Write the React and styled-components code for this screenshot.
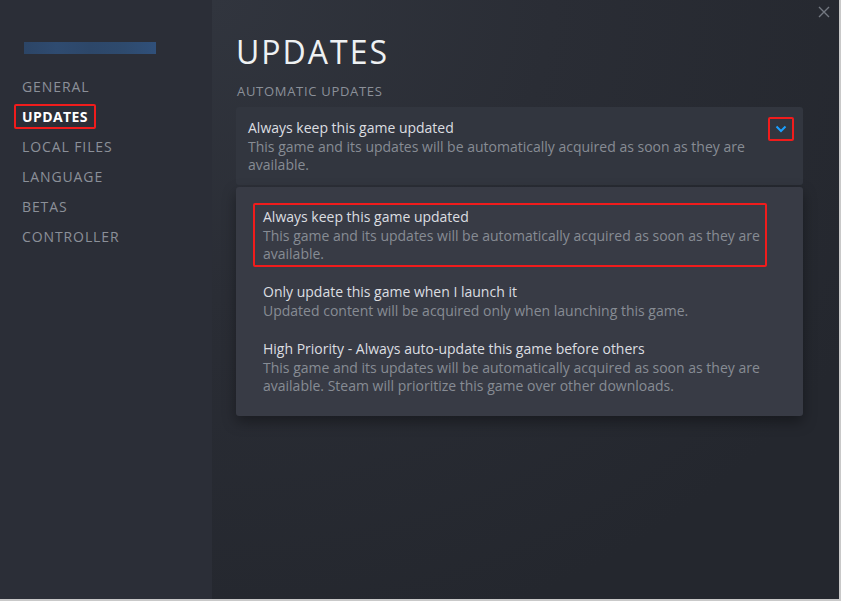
import React from "react";
import styled, { createGlobalStyle } from "styled-components";

const GlobalStyle = createGlobalStyle`
  html, body {
    margin: 0;
    padding: 0;
    background: #c9c9c9;
  }
  body {
    font-family: "Open Sans", "Noto Sans", Arial, sans-serif;
  }
`;

const Window = styled.div`
  display: flex;
  width: 840px;
  height: 600px;
  box-sizing: border-box;
  border-right: 1px solid #c9c9c9;
  border-bottom: 1px solid #c9c9c9;
  overflow: hidden;
`;

const Sidebar = styled.nav`
  width: 212px;
  flex-shrink: 0;
  background: #2b2e37;
  padding: 42px 0 0 22px;
  box-sizing: border-box;
  display: flex;
  flex-direction: column;
`;

const NameBar = styled.div`
  width: 132px;
  height: 12px;
  margin: 0 0 17px 2px;
  background: linear-gradient(
    90deg,
    #2c4566 0%,
    #2f4b70 25%,
    #2d4769 50%,
    #2e4a6d 75%,
    #30507a 100%
  );
`;

const NavItem = styled.div`
  height: 30px;
  display: flex;
  align-items: center;
`;

const NavLabel = styled.span`
  margin-left: -8px;
  padding: 3px 8px;
  line-height: 19px;
  font-size: 14px;
  letter-spacing: ${(p) => (p.active ? "0.4px" : "0.9px")};
  border-radius: 2px;
  color: ${(p) => (p.active ? "#ffffff" : "#8b9099")};
  font-weight: ${(p) => (p.active ? 700 : 400)};
  box-shadow: ${(p) => (p.marked ? "inset 0 0 0 2px #f01c1c" : "none")};
`;

const Main = styled.main`
  position: relative;
  flex: 1;
  padding: 30px 36px 0 24px;
  background: radial-gradient(
    ellipse 120% 110% at 0% 0%,
    #31353e 0%,
    #2a2d35 45%,
    #24272e 100%
  );
`;

const CloseButton = styled.div`
  position: absolute;
  top: 6px;
  right: 9px;
  width: 12px;
  height: 12px;
  display: flex;
  color: #737881;
`;

const Title = styled.h1`
  margin: 0;
  font-size: 32px;
  line-height: 44px;
  font-weight: 400;
  letter-spacing: 2px;
  color: #eef1f3;
`;

const SectionLabel = styled.div`
  margin-top: 8px;
  padding-left: 1px;
  font-size: 13px;
  line-height: 18px;
  color: #8b9099;
  letter-spacing: 0.7px;
`;

const Dropdown = styled.div`
  margin-top: 7px;
  display: flex;
  align-items: flex-start;
  gap: 10px;
  padding: 10px 9px 11px 12px;
  border-radius: 3px;
  background: #32363f;
`;

const OptionText = styled.div`
  flex: 1;
  padding-top: 2px;
  font-size: 14px;
  line-height: 18px;
`;

const OptionTitle = styled.div`
  margin-bottom: 1px;
  color: #dcdee1;
`;

const OptionDesc = styled.div`
  color: #878c94;
`;

const ChevronBox = styled.div`
  width: 26px;
  height: 24px;
  box-sizing: border-box;
  display: flex;
  align-items: center;
  justify-content: center;
  border: 2px solid #f01c1c;
  border-radius: 2px;
  color: #1a9fff;
`;

const Menu = styled.div`
  margin-top: 2px;
  display: flex;
  flex-direction: column;
  gap: 11px;
  padding: 16px 36px 17px 17px;
  border-radius: 3px;
  font-size: 14px;
  line-height: 18px;
  background: #383b45;
  box-shadow: 0 6px 14px rgba(0, 0, 0, 0.35);
`;

const MenuItem = styled.div`
  padding: 5px 3px 4px 10px;
  border-radius: 2px;
  box-shadow: ${(p) => (p.marked ? "inset 0 0 0 2px #f01c1c" : "none")};
`;

const navItems = [
  "GENERAL",
  "UPDATES",
  "LOCAL FILES",
  "LANGUAGE",
  "BETAS",
  "CONTROLLER",
];

const options = [
  {
    title: "Always keep this game updated",
    desc: "This game and its updates will be automatically acquired as soon as they are available.",
  },
  {
    title: "Only update this game when I launch it",
    desc: "Updated content will be acquired only when launching this game.",
  },
  {
    title: "High Priority - Always auto-update this game before others",
    desc: "This game and its updates will be automatically acquired as soon as they are available. Steam will prioritize this game over other downloads.",
  },
];

const App = () => {
  return (
    <>
      <GlobalStyle />
      <Window>
        <Sidebar>
          <NameBar />
          {navItems.map((item) => (
            <NavItem key={item}>
              <NavLabel active={item === "UPDATES"} marked={item === "UPDATES"}>
                {item}
              </NavLabel>
            </NavItem>
          ))}
        </Sidebar>
        <Main>
          <CloseButton>
            <svg width="12" height="12" viewBox="0 0 12 12">
              <path
                d="M1 1 L11 11 M11 1 L1 11"
                stroke="currentColor"
                strokeWidth="1.4"
                fill="none"
              />
            </svg>
          </CloseButton>
          <Title>UPDATES</Title>
          <SectionLabel>AUTOMATIC UPDATES</SectionLabel>
          <Dropdown>
            <OptionText>
              <OptionTitle>{options[0].title}</OptionTitle>
              <OptionDesc>{options[0].desc}</OptionDesc>
            </OptionText>
            <ChevronBox>
              <svg width="12" height="8" viewBox="0 0 12 8">
                <path
                  d="M1.5 1.5 L6 6 L10.5 1.5"
                  stroke="currentColor"
                  strokeWidth="2"
                  fill="none"
                />
              </svg>
            </ChevronBox>
          </Dropdown>
          <Menu>
            {options.map((opt, i) => (
              <MenuItem key={opt.title} marked={i === 0}>
                <OptionTitle>{opt.title}</OptionTitle>
                <OptionDesc>{opt.desc}</OptionDesc>
              </MenuItem>
            ))}
          </Menu>
        </Main>
      </Window>
    </>
  );
};

export default App;
